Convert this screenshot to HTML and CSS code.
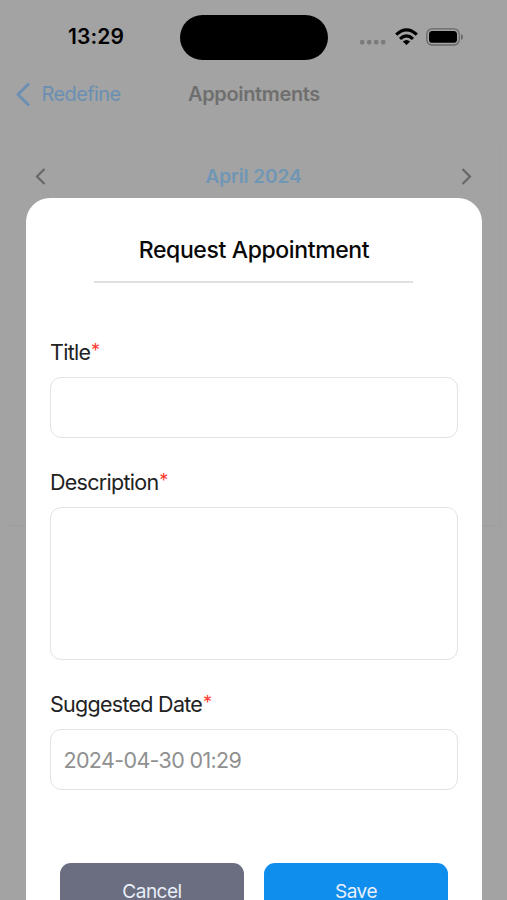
FILE: index.html
```html
<!DOCTYPE html>
<html lang="en">
<head>
<meta charset="utf-8">
<meta name="viewport" content="width=device-width, initial-scale=1">
<title>Request Appointment</title>
<link rel="stylesheet" href="styles.css">
</head>
<body>
<div class="screen">
  <div class="backcard"></div>
  <header class="status">
    <div class="side"><span class="clock">13:29</span></div>
    <div class="island"></div>
    <div class="side icons">
      <svg class="dots" width="26" height="5" viewBox="0 0 26 5"><g fill="#7c7c7c"><rect width="4.4" height="4.4" rx="1.4"/><rect x="7" width="4.4" height="4.4" rx="1.4"/><rect x="14" width="4.4" height="4.4" rx="1.4"/><rect x="21" width="4.4" height="4.4" rx="1.4"/></g></svg>
      <svg class="wifi" width="23" height="18" viewBox="0 0 23 18"><g fill="none" stroke="#000" stroke-width="3.1"><path d="M1.200 6.600Q11.500-2.800 21.800 6.600"/><path d="M5 10.900Q11.500 4.900 18 10.900"/></g><path d="M11.500 17L7.800 13.600Q11.500 10.500 15.200 13.600Z"/></svg>
      <svg class="battery" width="38" height="18" viewBox="0 0 38 18"><rect x=".8" y=".8" width="32.4" height="16.2" rx="5.2" fill="none" stroke="#686868" stroke-width="1.3"/><rect x="3" y="3" width="28" height="11.800" rx="3.400"/><path d="M35 6Q37 6.500 37 9T35 12Z" fill="#686868"/></svg>
    </div>
  </header>
  <nav class="nav">
    <svg class="back" width="15" height="25" viewBox="0 0 15 25"><path d="M13 1.500L2 12.500L13 23.500" fill="none" stroke="#6a8fb2" stroke-width="2.8"/></svg>
    <span class="back-label">Redefine</span>
    <span class="nav-title">Appointments</span>
  </nav>
  <div class="month">
    <svg width="11" height="17" viewBox="0 0 11 17"><path d="M9.500 1L2 8.500L9.500 16" fill="none" stroke="#686868" stroke-width="2.200"/></svg>
    <span class="month-name">April 2024</span>
    <svg width="11" height="17" viewBox="0 0 11 17"><path d="M1.500 1L9 8.500L1.500 16" fill="none" stroke="#686868" stroke-width="2.200"/></svg>
  </div>
  <main class="modal">
    <h1 class="title">Request Appointment</h1>
    <div class="field">
      <label class="label" for="title"><span>Title</span><span class="req">*</span></label>
      <input class="box" id="title">
    </div>
    <div class="field">
      <label class="label" for="desc"><span>Description</span><span class="req">*</span></label>
      <textarea class="box tall" id="desc"></textarea>
    </div>
    <div class="field">
      <div class="label"><span>Suggested Date</span><span class="req">*</span></div>
      <div class="box"><span class="value">2024-04-30 01:29</span></div>
    </div>
    <div class="actions">
      <button class="btn cancel">Cancel</button>
      <button class="btn save">Save</button>
    </div>
  </main>
</div>
</body>
</html>
```
FILE: styles.css
```css
* { box-sizing: border-box; }
body { margin: 0; font-family: Inter, "Liberation Sans", sans-serif; }
.screen { position: relative; height: 900px; overflow: hidden; background: #a3a3a3; }
.backcard { position: absolute; top: 146px; left: 7px; width: 494px; height: 380px; border-right: 1px solid #9f9f9f; border-bottom: 1px solid #9d9d9d; border-radius: 4px; }
.status { display: flex; height: 74px; align-items: center; padding-left: 1px; }
.side { flex: none; width: 179px; }
.clock { display: block; padding-left: 67px; font-size: 21px; font-weight: 600; line-height: 26px; letter-spacing: 0.1px; }
.island { flex: none; width: 148px; height: 45px; border-radius: 23px; background: #000; }
.icons { display: flex; padding-left: 32px; }
.icons svg { flex: none; }
.dots { margin: 11px 9px 0 0; }
.wifi { margin-right: 8px; }
.status .battery, .status .wifi { margin-top: -1px; }
.nav { display: flex; align-items: center; height: 40px; padding-left: 16px; line-height: 39px; }
.back { margin-right: 10px; }
.back-label { width: 147px; padding-left: 0.5px; color: #6a8fb2; font-size: 20px; letter-spacing: -0.6px; }
.nav-title { color: #6f6f6f; font-size: 20px; font-weight: 600; letter-spacing: -0.35px; }
.month { display: flex; justify-content: space-between; align-items: center; height: 40px; margin-top: 42px; padding: 0 35px; }
.month-name { color: #6f96b5; font-size: 19px; font-weight: 600; letter-spacing: -0.05px; }
.modal { position: relative; width: 455.5px; height: 760px; margin: 1.5px 0 0 26.3px; padding: 31.5px 23.7px 0; border-radius: 24px 24px 0 0; background: #fff; }
.title { width: 319px; height: 54px; margin: 0 0 54px 44px; padding: 1px 0 0 1px; border-bottom: 2px solid #e0e0e0; color: #080808; font-size: 23px; font-weight: 500; line-height: 40px; text-align: center; letter-spacing: -0.38px; white-space: nowrap; }
.field { margin-bottom: 29px; }
.label { display: flex; height: 30px; margin-bottom: 10px; color: #222; font-size: 21.5px; line-height: 30px; letter-spacing: -0.72px; }
.label span:first-child { margin-right: 0.8px; }
.req { color: #ff3b30; font-size: 18px; line-height: 28px; }
.box { display: flex; align-items: center; width: 408px; height: 61px; padding: 0 12.5px; border: 1.5px solid #e3e3e3; border-radius: 11px; background: #fff; }
.tall { height: 153px; resize: none; }
.value { color: #909090; font-size: 21.5px; letter-spacing: -0.65px; }
.actions { display: flex; gap: 20px; margin: 73px 0 0 10px; }
.btn { width: 184px; height: 58px; padding: 0; border: 0; border-radius: 11px; color: #e9eff9; font: 19px/58px Inter, sans-serif; letter-spacing: -0.5px; }
.cancel { background: #6b6e80; }
.save { background: #108eee; }
```
